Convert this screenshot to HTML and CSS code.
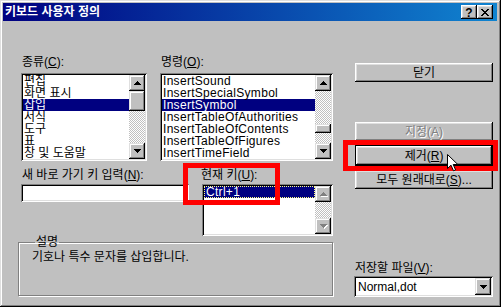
FILE: index.html
```html
<!DOCTYPE html>
<html lang="ko">
<head>
    <meta charset="UTF-8">
    <title>키보드 사용자 정의</title>
    <link rel="stylesheet" href="styles.css">
</head>
<body>
    <div class="window">
        <div class="titlebar">
            <span class="title">키보드 사용자 정의</span>
            <div class="title-buttons">
                <span class="tbtn help">?</span>
                <span class="tbtn">
                    <svg width="8" height="7" viewBox="0 0 8 7"><path d="M0 0h2v1h1v1h2V1h1V0h2v1H7v1H6v1H5v1h1v1h1v1h1v1H6V6H5V5H3v1H2v1H0V6h1V5h1V4h1V3H2V2H1V1H0z" fill="#000"/></svg>
                </span>
            </div>
        </div>

        <div class="content">
            <div class="main">
                <div class="pickers">
                    <div class="field cat">
                        <label>종류(<u>C</u>):</label>
                        <div class="listbox">
                            <ul class="items">
                                <li>편집</li>
                                <li>화면 표시</li>
                                <li class="selected">삽입</li>
                                <li>서식</li>
                                <li>도구</li>
                                <li>표</li>
                                <li>창 및 도움말</li>
                            </ul>
                            <div class="scrollbar">
                                <span class="sb-btn"><svg width="7" height="4" viewBox="0 0 7 4"><path d="M3 0h1v1h1v1h1v1h1v1H0V3h1V2h1V1h1z"/></svg></span>
                                <div class="track"><span class="thumb thumb-cat"></span></div>
                                <span class="sb-btn"><svg width="7" height="4" viewBox="0 0 7 4"><path d="M0 0h7v1H6v1H5v1H4v1H3V3H2V2H1V1H0z"/></svg></span>
                            </div>
                        </div>
                    </div>
                    <div class="field cmd">
                        <label>명령(<u>O</u>):</label>
                        <div class="listbox">
                            <ul class="items latin">
                                <li>InsertSound</li>
                                <li>InsertSpecialSymbol</li>
                                <li class="selected">InsertSymbol</li>
                                <li>InsertTableOfAuthorities</li>
                                <li>InsertTableOfContents</li>
                                <li>InsertTableOfFigures</li>
                                <li>InsertTimeField</li>
                            </ul>
                            <div class="scrollbar">
                                <span class="sb-btn"><svg width="7" height="4" viewBox="0 0 7 4"><path d="M3 0h1v1h1v1h1v1h1v1H0V3h1V2h1V1h1z"/></svg></span>
                                <div class="track"><span class="thumb thumb-cmd"></span></div>
                                <span class="sb-btn"><svg width="7" height="4" viewBox="0 0 7 4"><path d="M0 0h7v1H6v1H5v1H4v1H3V3H2V2H1V1H0z"/></svg></span>
                            </div>
                        </div>
                    </div>
                </div>

                <div class="keys">
                    <div class="field newkey">
                        <label>새 바로 가기 키 입력(<u>N</u>):</label>
                        <div class="textbox"></div>
                    </div>
                    <div class="field curkeys">
                        <label>현재 키(<u>U</u>):</label>
                        <div class="listbox short">
                            <ul class="items latin">
                                <li class="selected focused">Ctrl+1</li>
                            </ul>
                            <div class="scrollbar">
                                <span class="sb-btn disabled"><svg width="8" height="5" viewBox="0 0 8 5"><path d="M4 1h1v1h1v1h1v1h1v1H1V4h1V3h1V2h1z" fill="#fff"/><path d="M3 0h1v1h1v1h1v1h1v1H0V3h1V2h1V1h1z" fill="#808080"/></svg></span>
                                <div class="track"></div>
                                <span class="sb-btn disabled"><svg width="8" height="5" viewBox="0 0 8 5"><path d="M1 1h7v1H7v1H6v1H5v1H4V4H3V3H2V2H1z" fill="#fff"/><path d="M0 0h7v1H6v1H5v1H4v1H3V3H2V2H1V1H0z" fill="#808080"/></svg></span>
                            </div>
                        </div>
                    </div>
                </div>

                <fieldset class="group">
                    <legend>설명</legend>
                    <p>기호나 특수 문자를 삽입합니다.</p>
                </fieldset>
            </div>

            <div class="side">
                <span class="btn btn-close">닫기</span>
                <span class="btn btn-assign disabled">지정(A)</span>
                <span class="btn btn-remove default">제거(<u>R</u>)</span>
                <span class="btn btn-reset">모두 원래대로(<u>S</u>)...</span>
                <label class="save-label">저장할 파일(<u>V</u>):</label>
                <div class="combo">
                    <span class="combo-text">Normal,dot</span>
                    <span class="sb-btn"><svg width="7" height="4" viewBox="0 0 7 4"><path d="M0 0h7v1H6v1H5v1H4v1H3V3H2V2H1V1H0z"/></svg></span>
                </div>
            </div>
        </div>

        <!-- annotation overlays -->
        <div class="mark mark-remove"></div>
        <div class="mark mark-keys"></div>
        <svg class="cursor" width="12" height="18" viewBox="0 0 12 18"><path d="M0.5 0.5V14.5L4 11.2L6.5 16.8L8.6 15.9L6.2 10.5H10.8Z" fill="#fff" stroke="#000" stroke-width="1" stroke-linejoin="miter"/></svg>
    </div>
</body>
</html>
```

FILE: styles.css
```css
* {
    margin: 0;
    padding: 0;
    box-sizing: border-box;
}

body {
    background: #c0c0c0;
    color: #000;
    font: 12px/12px "Liberation Sans", "Noto Sans CJK KR", sans-serif;
}

u {
    text-decoration: underline;
    text-underline-offset: 1px;
}

.window {
    position: relative;
    width: 501px;
    height: 307px;
    padding: 3px 4px 4px 3px;
    background: #c0c0c0;
    box-shadow: inset -1px -1px #000, inset 1px 1px #dfdfdf, inset -2px -2px #808080, inset 2px 2px #fff;
}

/* title bar */
.titlebar {
    height: 18px;
    display: flex;
    align-items: center;
    justify-content: space-between;
    padding: 0 4px 0 2px;
    background: linear-gradient(90deg, #000080 0%, #1084d0 100%);
}

.title {
    color: #fff;
    font-weight: bold;
}

.title-buttons {
    display: flex;
}

.tbtn {
    width: 16px;
    height: 14px;
    display: flex;
    align-items: center;
    justify-content: center;
    background: #c0c0c0;
    box-shadow: inset -1px -1px #000, inset 1px 1px #fff, inset -2px -2px #808080, inset 2px 2px #dfdfdf;
}

.tbtn.help {
    font: bold 12px/12px "Liberation Sans", sans-serif;
    padding-top: 1px;
}

/* body layout */
.content {
    display: flex;
    gap: 21px;
    padding-left: 15px;
    height: 282px;
}

.main {
    width: 315px;
    display: flex;
    flex-direction: column;
}

.side {
    width: 139px;
    display: flex;
    flex-direction: column;
    padding-top: 42px;
}

.field label {
    display: block;
    margin-left: 1px;
}

.pickers {
    display: flex;
    gap: 13px;
    margin: 35px 0 0 3px;
}

.pickers label {
    margin-bottom: 5px;
}

.keys {
    display: flex;
    gap: 13px;
    margin: 8px 0 0 3px;
}

.keys label {
    margin-bottom: 3px;
}

.curkeys label {
    margin-left: -1px;
}

/* sunken controls */
.listbox, .textbox, .combo {
    background: #fff;
    padding: 2px;
    box-shadow: inset 1px 1px #808080, inset -1px -1px #fff, inset 2px 2px #000, inset -2px -2px #dfdfdf;
}

.listbox {
    display: flex;
    height: 88px;
}

.cat .listbox { width: 126px; }
.cmd .listbox { width: 173px; }

.listbox.short {
    width: 131px;
    height: 52px;
}

.textbox {
    width: 168px;
    height: 18px;
}

.items {
    flex: 1;
    list-style: none;
    overflow: hidden;
}

.items li {
    height: 12px;
    padding-left: 1px;
    white-space: nowrap;
}

.items.latin li {
    letter-spacing: 0.3px;
}

.items li.selected {
    background: #000080;
    color: #fff;
}

.items li.focused {
    border: 1px dotted #ffff80;
    line-height: 10px;
    padding-left: 1px;
}

/* scrollbars */
.scrollbar {
    width: 16px;
    display: flex;
    flex-direction: column;
}

.sb-btn {
    width: 16px;
    height: 16px;
    flex: none;
    display: flex;
    align-items: center;
    justify-content: center;
    background: #c0c0c0;
    box-shadow: inset -1px -1px #000, inset 1px 1px #dfdfdf, inset -2px -2px #808080, inset 2px 2px #fff;
}

.sb-btn svg {
    fill: #000;
}

.sb-btn.disabled svg {
    margin: 1px 0 0 1px;
}

.track {
    flex: 1;
    background: repeating-conic-gradient(#fff 0 25%, #c0c0c0 0 50%) 0 0 / 2px 2px;
}

.thumb {
    display: block;
    height: 20px;
    background: #c0c0c0;
    box-shadow: inset -1px -1px #000, inset 1px 1px #dfdfdf, inset -2px -2px #808080, inset 2px 2px #fff;
}

.thumb-cmd {
    height: 9px;
    margin-top: 33px;
}

/* description group */
.group {
    margin: 0;
    padding: 0 0 0 13px;
    border: 1px solid #808080;
    box-shadow: inset 1px 1px #fff, 1px 1px #fff;
}

.group legend {
    margin-left: 3px;
    padding: 0 1px;
    line-height: 12px;
}

.group p {
    margin-top: 3px;
    height: 44px;
}

/* push buttons */
.btn {
    width: 138px;
    height: 19px;
    margin-left: 1px;
    display: flex;
    align-items: center;
    justify-content: center;
    background: #c0c0c0;
    box-shadow: inset -1px -1px #000, inset 1px 1px #fff, inset -2px -2px #808080, inset 2px 2px #dfdfdf;
}

.btn.disabled {
    color: #808080;
    text-shadow: 1px 1px #fff;
}

.btn.default {
    height: 21px;
    border: 1px solid #000;
}

.btn-assign { margin-top: 40px; }
.btn-remove { margin-top: 4px; }
.btn-reset { margin-top: 4px; }

.save-label {
    margin: 73px 0 2px 1px;
}

.combo {
    height: 21px;
    display: flex;
    align-items: center;
}

.combo-text {
    flex: 1;
    padding-left: 2px;
    padding-top: 1px;
}

.combo .sb-btn {
    height: 17px;
}

/* red annotation boxes and pointer */
.mark {
    position: absolute;
    border: 5px solid #f00;
}

.mark-remove {
    left: 343px;
    top: 140px;
    width: 155px;
    height: 31px;
}

.mark-keys {
    left: 183px;
    top: 163px;
    width: 97px;
    height: 42px;
}

.cursor {
    position: absolute;
    left: 447px;
    top: 154px;
}
```
